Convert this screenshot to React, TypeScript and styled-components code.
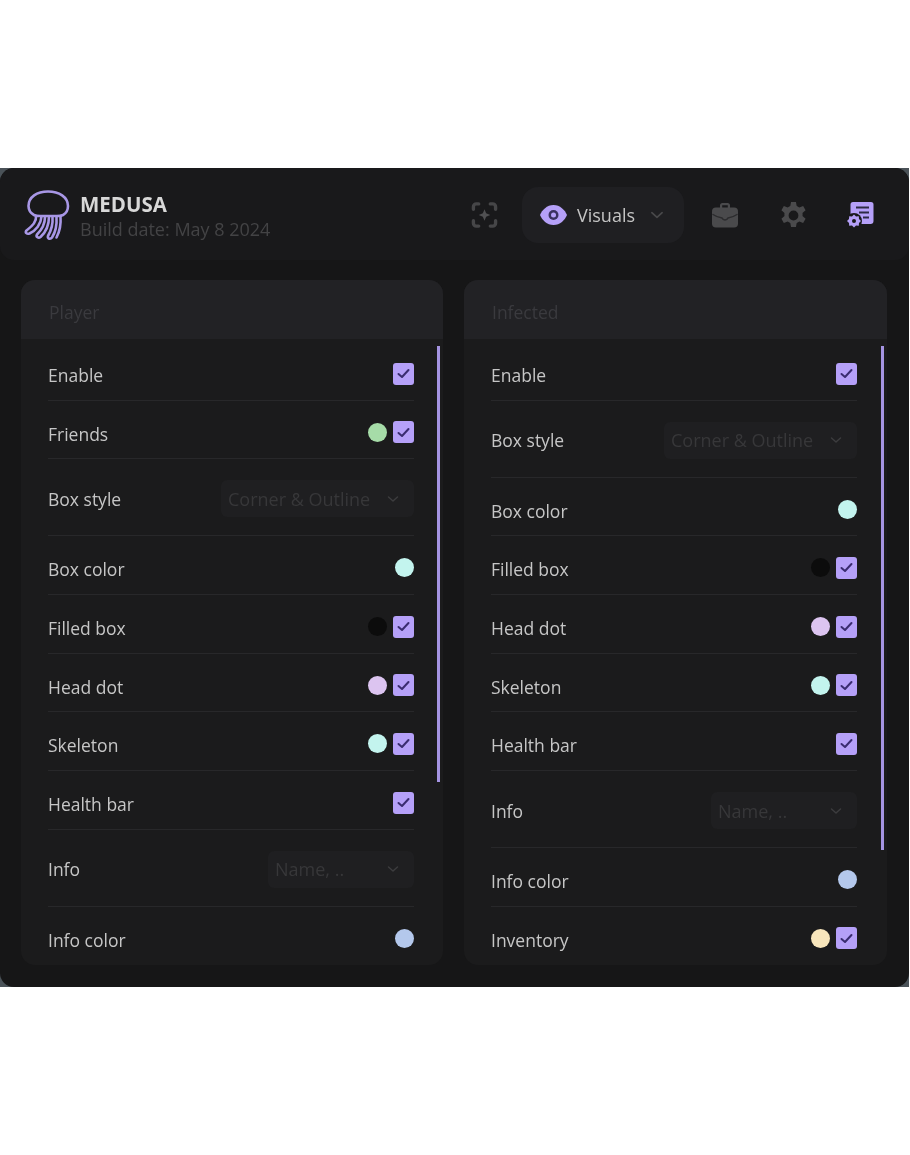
import React from 'react';
import styled, { createGlobalStyle } from 'styled-components';

const GlobalStyle = createGlobalStyle`
  html, body {
    margin: 0;
    background: #ffffff;
  }
  * {
    box-sizing: border-box;
  }
`;

const Page = styled.div`
  width: 910px;
  height: 1155px;
  padding-top: 168px;
  font-family: 'Open Sans', 'Noto Sans', sans-serif;
`;

const Backdrop = styled.div`
  width: 909px;
  height: 819px;
  background: #4a5258;
`;

const Window = styled.div`
  height: 100%;
  background: #161617;
  border-radius: 14px;
  overflow: hidden;
  filter: blur(0.45px);
`;

const Header = styled.header`
  height: 92px;
  background: #19191b;
  border-radius: 14px;
  display: flex;
  align-items: center;
  padding: 2px 35px 0 24px;
`;

const Brand = styled.div`
  display: flex;
  align-items: center;
  gap: 11px;
  flex: 1;
`;

const BrandText = styled.div`
  display: flex;
  flex-direction: column;
  gap: 2px;
  margin-left: -1px;
  padding-top: 2px;
`;

const BrandName = styled.span`
  font-size: 20.500px;
  line-height: 24px;
  font-weight: 700;
  color: #d8d8d8;
`;

const BuildDate = styled.span`
  font-size: 18px;
  line-height: 22px;
  color: #434345;
`;

const Nav = styled.nav`
  display: flex;
  align-items: center;
`;

const NavIcon = styled.span<{ $gap?: number }>`
  display: flex;
  margin-left: ${p => p.$gap ?? 0}px;
`;

const ActiveTab = styled.div`
  width: 162px;
  height: 56px;
  margin-left: 24px;
  padding-left: 18px;
  border-radius: 16px;
  background: #1f1f22;
  display: flex;
  align-items: center;
  color: #c4c4c4;
  font-size: 18px;
`;

const TabLabel = styled.span`
  margin-left: 10px;
  margin-right: 14px;
`;

const Columns = styled.main`
  display: grid;
  grid-template-columns: 422px 423px;
  gap: 21px;
  padding: 20px 0 0 21px;
`;

const Panel = styled.section`
  position: relative;
  height: 685px;
  background: #1b1b1c;
  border-radius: 14px;
  overflow: hidden;
`;

const PanelTitle = styled.div`
  height: 59px;
  background: #222225;
  padding: 5px 28px 0;
  display: flex;
  align-items: center;
  font-size: 17.500px;
  color: #3a3a3e;
`;

const Scrollbar = styled.div<{ $height: number; $right: number }>`
  position: absolute;
  top: 66px;
  right: ${p => p.$right}px;
  width: 3px;
  height: ${p => p.$height}px;
  background: #a594e2;
`;

const List = styled.div<{ $right: number }>`
  padding: 3px ${p => p.$right}px 0 27px;
`;

const Row = styled.div<{ $tall?: boolean }>`
  display: flex;
  align-items: center;
  padding: ${p => (p.$tall ? '21px 0 18px' : '20.5px 0 12.2px')};
  border-bottom: 1px solid #28282a;

  &:last-child {
    border-bottom: none;
  }
`;

const RowLabel = styled.span`
  flex: 1;
  font-size: 17.500px;
  line-height: 22px;
  color: #c6c6c6;
`;

const Controls = styled.div`
  display: flex;
  align-items: center;
  gap: 6px;
  height: 22px;
  margin-bottom: 3px;
`;

const Dot = styled.span<{ $color: string }>`
  width: 19px;
  height: 19px;
  border-radius: 50%;
  background: ${p => p.$color};
`;

const Check = styled.span`
  width: 21px;
  height: 22px;
  border-radius: 3px;
  background: #b5a0f8;
  display: flex;
  align-items: center;
  justify-content: center;
`;

const Select = styled.div<{ $width: number }>`
  width: ${p => p.$width}px;
  height: 37px;
  padding: 0 14px 0 7px;
  border-radius: 6px;
  background: #1f1f21;
  display: flex;
  align-items: center;
  justify-content: space-between;
  font-size: 18px;
  color: #373739;
`;

const Chevron = ({ color, size = 14 }: { color: string; size?: number }) => (
  <svg width={size} height={size} viewBox="0 0 14 14" fill="none" stroke={color} strokeWidth="1.5" strokeLinecap="round" strokeLinejoin="round">
    <path d="M2.5 5 7 9l4.5-4" />
  </svg>
);

const CheckBox = () => (
  <Check>
    <svg width="15" height="15" viewBox="0 0 15 15" fill="none" stroke="#3a2c70" strokeWidth="2" strokeLinecap="round" strokeLinejoin="round">
      <path d="M2.5 8 6 11l6.5-7" />
    </svg>
  </Check>
);

const Jellyfish = () => (
  <svg width="46" height="52" viewBox="0 0 46 52" fill="none" stroke="#a897e6" strokeWidth="2.6" strokeLinecap="round" strokeLinejoin="round">
    <path d="M4.500 17C4.500 8 13 2.500 24 2.500S44 8 44 17c0 4-1.500 7-5 9-3 1.500-6 1-9.500 1H19c-3 0-6 .5-9-1-3.500-2-5.500-5-5.500-9z" />
    <path d="M12 27c.5 4-2 9-9.500 14.500-2 2 .5 4 3 3C12 41.500 17 35 17.500 27.500" />
    <path d="M21 28c0 5-1.500 11-8 17.500-1.500 2.500 1.500 4 3.500 2.500C22 43 25 35 25 27.500" />
    <path d="M28.500 28c.5 6-.5 12-4.500 19-1 3 2.500 3.500 4 1.500 3.500-5.500 5-13 4.500-20.500" />
    <path d="M36.500 27c.5 7-.5 15-4 21.500" />
  </svg>
);

const FocusIcon = () => (
  <svg width="27" height="28" viewBox="0 0 28 28" fill="none" stroke="#464648" strokeWidth="3.500" strokeLinecap="round" strokeLinejoin="round">
    <path d="M2.500 8V5.500a3 3 0 0 1 3-3H8M20 2.500h2.500a3 3 0 0 1 3 3V8M25.500 20v2.500a3 3 0 0 1-3 3H20M8 25.500H5.500a3 3 0 0 1-3-3V20" />
    <path fill="#505052" stroke="none" d="m14 8 1.700 4.300L20 14l-4.300 1.700L14 20l-1.700-4.300L8 14l4.300-1.700z" />
  </svg>
);

const EyeIcon = () => (
  <svg width="27" height="22" viewBox="0 0 27 22">
    <path fill="#b5a0f8" d="M13.500 1C20 1 25 6 27 11c-2 5-7 10-13.500 10S2 16 0 11C2 6 7 1 13.500 1z" />
    <circle cx="13.500" cy="11" r="5" fill="#3a3160" />
    <circle cx="13.500" cy="11" r="2.500" fill="#b5a0f8" />
  </svg>
);

const BriefcaseIcon = () => (
  <svg width="26" height="26" viewBox="0 0 26 26" fill="#4a4a4c">
    <path d="M8 6V3.500A2.500 2.500 0 0 1 10.500 1h5A2.500 2.500 0 0 1 18 3.500V6h-2.200V3.200h-5.600V6z" />
    <rect y="5.500" width="26" height="20" rx="4" />
    <path fill="none" stroke="#2c2c2e" strokeWidth="1.500" strokeLinecap="round" d="M1 12.500c3 2 6 3 9 3.500 1 2.500 5 2.500 6 0 3-.5 6-1.500 9-3.500" />
  </svg>
);

const GearIcon = () => (
  <svg width="27" height="27" viewBox="1.500 1.500 21 21" fill="#4a4a4c">
    <path d="M13.900 1.500h-3.800l-.6 3.100a8 8 0 0 0-2 1.200l-3-1.100-1.900 3.300 2.400 2.100a8 8 0 0 0 0 2.300l-2.400 2.100 1.900 3.300 3-1.100a8 8 0 0 0 2 1.200l.6 3.100h3.800l.6-3.100a8 8 0 0 0 2-1.200l3 1.100 1.900-3.300-2.400-2.100a8 8 0 0 0 0-2.300l2.400-2.100-1.900-3.300-3 1.100a8 8 0 0 0-2-1.200zM12 15.800a3.800 3.800 0 1 1 0-7.600 3.800 3.800 0 0 1 0 7.600z" fillRule="evenodd" />
  </svg>
);

const CertificateIcon = () => (
  <svg width="28" height="28" viewBox="0 0 28 28">
    <path fill="#b5a0f8" d="M7 1h18a2.500 2.500 0 0 1 2.500 2.500V20a3 3 0 0 1-3 3H12V14H4.500V3.500A2.500 2.500 0 0 1 7 1z" />
    <path stroke="#2d2a44" strokeWidth="2" d="M10 6.500h13M13 11.500h10M17 16.500h6" />
    <circle cx="8" cy="20" r="8" fill="#19191b" />
    <path fill="#b5a0f8" fillRule="evenodd" d="m8 13.500 2 2 2.800-.2.200 2.800 2 1.900-2 1.900-.2 2.800-2.800-.2-2 2-2-2-2.800.2-.2-2.800-2-1.900 2-1.900.2-2.800 2.800.2zM8 18a2 2 0 1 0 0 4 2 2 0 0 0 0-4z" />
  </svg>
);

type Item = {
  label: string;
  dot?: string;
  check?: boolean;
  select?: string;
  selectWidth?: number;
};

const MINT = '#c3f4ee';

const player: Item[] = [
  { label: 'Enable', check: true },
  { label: 'Friends', dot: '#a6dca8', check: true },
  { label: 'Box style', select: 'Corner & Outline', selectWidth: 193 },
  { label: 'Box color', dot: MINT },
  { label: 'Filled box', dot: '#0c0c0c', check: true },
  { label: 'Head dot', dot: '#dcc4f0', check: true },
  { label: 'Skeleton', dot: MINT, check: true },
  { label: 'Health bar', check: true },
  { label: 'Info', select: 'Name, ..', selectWidth: 146 },
  { label: 'Info color', dot: '#b4c8ec' },
];

const infected: Item[] = [
  { label: 'Enable', check: true },
  { label: 'Box style', select: 'Corner & Outline', selectWidth: 193 },
  { label: 'Box color', dot: MINT },
  { label: 'Filled box', dot: '#0c0c0c', check: true },
  { label: 'Head dot', dot: '#dcc4f0', check: true },
  { label: 'Skeleton', dot: MINT, check: true },
  { label: 'Health bar', check: true },
  { label: 'Info', select: 'Name, ..', selectWidth: 146 },
  { label: 'Info color', dot: '#b4c8ec' },
  { label: 'Inventory', dot: '#f8e6bc', check: true },
];

type PanelProps = {
  title: string;
  items: Item[];
  barHeight: number;
  barRight: number;
  listRight: number;
};

const SettingsPanel = ({ title, items, barHeight, barRight, listRight }: PanelProps) => (
  <Panel>
    <PanelTitle>{title}</PanelTitle>
    <Scrollbar $height={barHeight} $right={barRight} />
    <List $right={listRight}>
      {items.map(item => (
        <Row key={item.label} $tall={!!item.select}>
          <RowLabel>{item.label}</RowLabel>
          {item.select ? (
            <Select $width={item.selectWidth ?? 146}>
              {item.select}
              <Chevron color="#3c3c3e" />
            </Select>
          ) : (
            <Controls>
              {item.dot && <Dot $color={item.dot} />}
              {item.check && <CheckBox />}
            </Controls>
          )}
        </Row>
      ))}
    </List>
  </Panel>
);

const App = () => (
  <Page>
    <GlobalStyle />
    <Backdrop>
      <Window>
        <Header>
          <Brand>
            <Jellyfish />
            <BrandText>
              <BrandName>MEDUSA</BrandName>
              <BuildDate>Build date: May 8 2024</BuildDate>
            </BrandText>
          </Brand>
          <Nav>
            <NavIcon>
              <FocusIcon />
            </NavIcon>
            <ActiveTab>
              <EyeIcon />
              <TabLabel>Visuals</TabLabel>
              <Chevron color="#48484a" size={16} />
            </ActiveTab>
            <NavIcon $gap={28}>
              <BriefcaseIcon />
            </NavIcon>
            <NavIcon $gap={42}>
              <GearIcon />
            </NavIcon>
            <NavIcon $gap={39}>
              <CertificateIcon />
            </NavIcon>
          </Nav>
        </Header>
        <Columns>
          <SettingsPanel title="Player" items={player} barHeight={436} barRight={3} listRight={29} />
          <SettingsPanel title="Infected" items={infected} barHeight={504} barRight={3} listRight={30} />
        </Columns>
      </Window>
    </Backdrop>
  </Page>
);

export default App;
